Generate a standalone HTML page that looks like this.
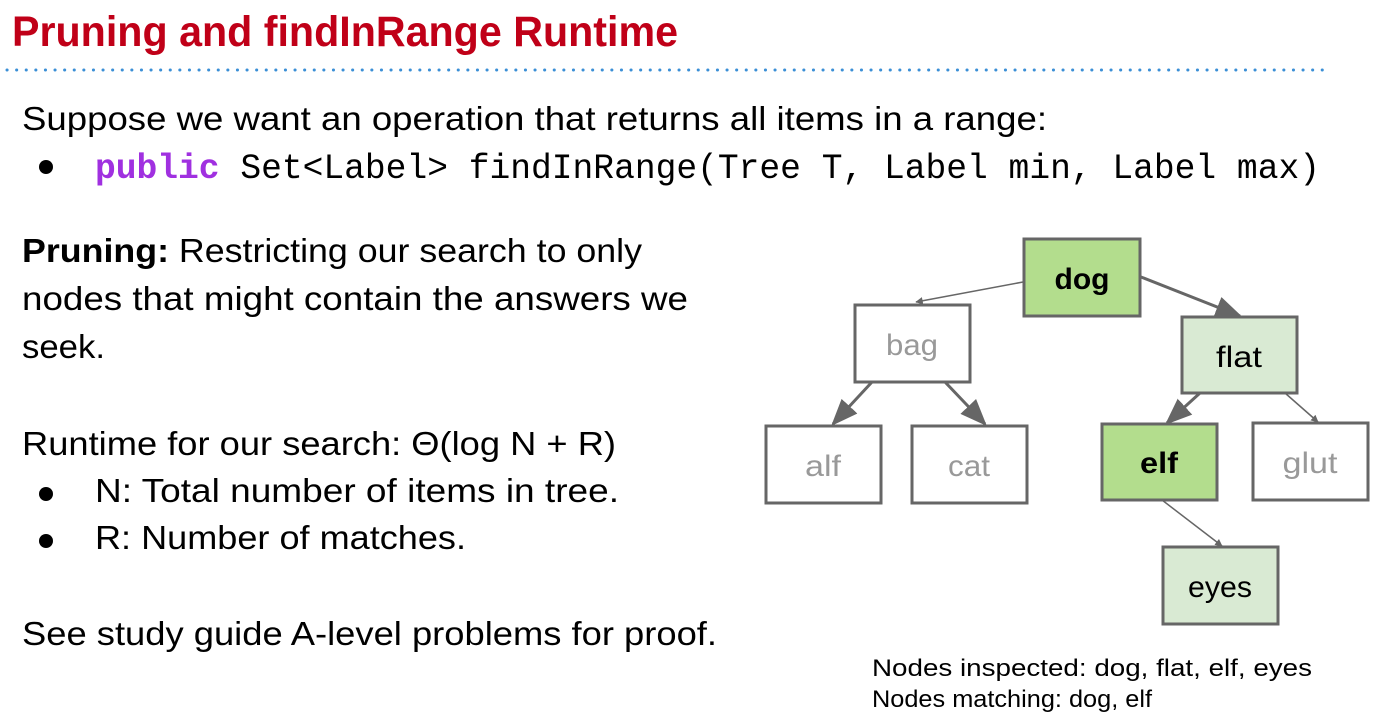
<!DOCTYPE html>
<html><head><meta charset="utf-8"><style>
html,body{margin:0;padding:0;background:#fff;width:1378px;height:727px;overflow:hidden}
svg{display:block}
.b{font-family:"Liberation Sans",sans-serif;font-size:33px;fill:#000}
.m{font-family:"Liberation Mono",monospace;font-size:35px;fill:#000}
.n{font-family:"Liberation Sans",sans-serif;font-size:30px;text-anchor:middle}
.s{font-family:"Liberation Sans",sans-serif;font-size:24px;fill:#000}
</style></head><body>
<svg width="1378" height="727" viewBox="0 0 1378 727" xmlns="http://www.w3.org/2000/svg">
<defs>
<marker id="ah" viewBox="0 0 10 10" refX="9" refY="5" markerWidth="5" markerHeight="5" orient="auto"><path d="M0,0 L10,5 L0,10 z" fill="#666"/></marker>
<marker id="ahs" viewBox="0 0 10 10" refX="9" refY="5" markerWidth="9" markerHeight="9" orient="auto"><path d="M0,1 L10,5 L0,9 z" fill="#666"/></marker>
</defs>
<text x="12" y="46" font-family="Liberation Sans,sans-serif" font-weight="bold" font-size="43" fill="#c00018" textLength="666" lengthAdjust="spacingAndGlyphs">Pruning and findInRange Runtime</text>
<line x1="7" y1="70" x2="1326" y2="70" stroke="#3b8fd6" stroke-width="3" stroke-dasharray="0.1 9.5" stroke-linecap="round"/>
<text class="b" x="22" y="130" textLength="1025" lengthAdjust="spacingAndGlyphs">Suppose we want an operation that returns all items in a range:</text>
<circle cx="46" cy="167" r="7" fill="#000"/>
<text class="m" x="95" y="178" textLength="1225" lengthAdjust="spacingAndGlyphs"><tspan fill="#a030e0" font-weight="bold">public</tspan> Set&lt;Label&gt; findInRange(Tree T, Label min, Label max)</text>
<text class="b" x="22" y="262" textLength="620" lengthAdjust="spacingAndGlyphs"><tspan font-weight="bold">Pruning:</tspan> Restricting our search to only</text>
<text class="b" x="22" y="310" textLength="666" lengthAdjust="spacingAndGlyphs">nodes that might contain the answers we</text>
<text class="b" x="22" y="358" textLength="83" lengthAdjust="spacingAndGlyphs">seek.</text>
<text class="b" x="22" y="455" textLength="594" lengthAdjust="spacingAndGlyphs">Runtime for our search:  Θ(log N + R)</text>
<circle cx="46" cy="494" r="7" fill="#000"/>
<text class="b" x="95" y="502" textLength="524" lengthAdjust="spacingAndGlyphs">N: Total number of items in tree.</text>
<circle cx="46" cy="541" r="7" fill="#000"/>
<text class="b" x="95" y="549" textLength="371" lengthAdjust="spacingAndGlyphs">R: Number of matches.</text>
<text class="b" x="22" y="645" textLength="695" lengthAdjust="spacingAndGlyphs">See study guide A-level problems for proof.</text>

<g stroke="#666" fill="none">
<line x1="1023" y1="282" x2="916" y2="302" stroke-width="1.5" marker-end="url(#ah)"/>
<line x1="1141" y1="277" x2="1240" y2="316" stroke-width="3" marker-end="url(#ahs)"/>
<line x1="872" y1="382" x2="833" y2="424" stroke-width="3" marker-end="url(#ahs)"/>
<line x1="945" y1="382" x2="985" y2="424" stroke-width="3" marker-end="url(#ahs)"/>
<line x1="1200" y1="393" x2="1167" y2="423" stroke-width="3" marker-end="url(#ahs)"/>
<line x1="1285" y1="393" x2="1318" y2="422" stroke-width="1.5" marker-end="url(#ah)"/>
<line x1="1162" y1="500" x2="1222" y2="546" stroke-width="1.5" marker-end="url(#ah)"/>
</g>
<g stroke="#666" stroke-width="3">
<rect x="1024" y="239" width="116" height="77" fill="#b3dd8d"/>
<rect x="855" y="305" width="115" height="77" fill="#fff"/>
<rect x="1182" y="317" width="115" height="76" fill="#d9ead3"/>
<rect x="766" y="426" width="115" height="77" fill="#fff"/>
<rect x="912" y="426" width="115" height="77" fill="#fff"/>
<rect x="1102" y="424" width="115" height="76" fill="#b3dd8d"/>
<rect x="1253" y="423" width="115" height="77" fill="#fff"/>
<rect x="1163" y="547" width="115" height="77" fill="#d9ead3"/>
</g>
<text class="n" x="1082" y="289" font-weight="bold" fill="#000" textLength="55" lengthAdjust="spacingAndGlyphs">dog</text>
<text class="n" x="912" y="355" fill="#999" textLength="52" lengthAdjust="spacingAndGlyphs">bag</text>
<text class="n" x="1239" y="367" fill="#000" textLength="46" lengthAdjust="spacingAndGlyphs">flat</text>
<text class="n" x="823" y="476" fill="#999" textLength="36" lengthAdjust="spacingAndGlyphs">alf</text>
<text class="n" x="969" y="476" fill="#999" textLength="42" lengthAdjust="spacingAndGlyphs">cat</text>
<text class="n" x="1159" y="473" font-weight="bold" fill="#000" textLength="38" lengthAdjust="spacingAndGlyphs">elf</text>
<text class="n" x="1310" y="473" fill="#999" textLength="55" lengthAdjust="spacingAndGlyphs">glut</text>
<text class="n" x="1220" y="597" fill="#000" textLength="64" lengthAdjust="spacingAndGlyphs">eyes</text>

<text class="s" x="872" y="676" textLength="440" lengthAdjust="spacingAndGlyphs">Nodes inspected: dog, flat, elf, eyes</text>
<text class="s" x="872" y="707" textLength="280" lengthAdjust="spacingAndGlyphs">Nodes matching: dog, elf</text>
</svg>
</body></html>
